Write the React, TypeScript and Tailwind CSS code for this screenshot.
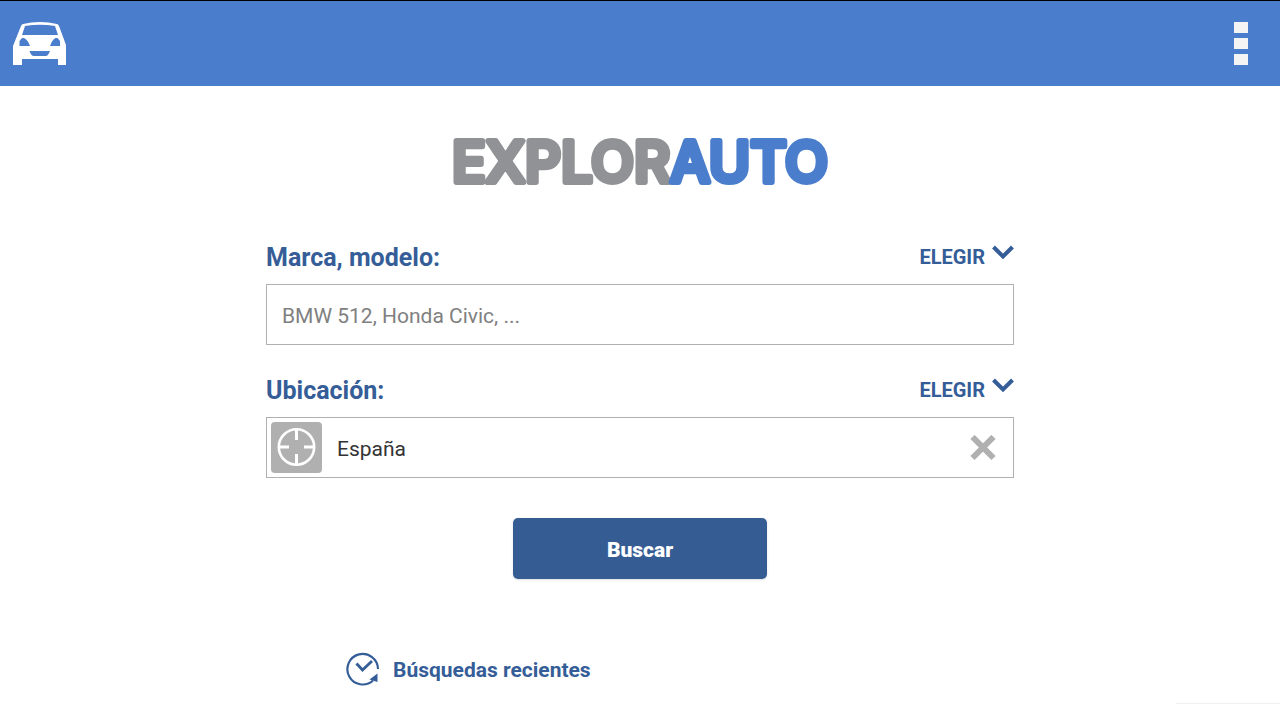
const fields = [
  { id: "model", label: "Marca, modelo:", placeholder: "BMW 512, Honda Civic, ...", value: "" },
  { id: "location", label: "Ubicación:", placeholder: "", value: "España" },
];

const CarIcon = () => (
  <svg width="54" height="44" viewBox="0 0 54 44" aria-hidden="true">
    <path
      fill="#fff"
      fillRule="evenodd"
      d="M10 2Q18 0 27 0t17 2Q45 2 46 4L53 23V43H45V37H9V43H0V24L8 4Q9 2 10 2ZM12 4 9 13H45L42 4Q27 1.500 12 4ZM9 16 6.500 19V24H17Q15 18 11 16ZM44.500 16 47 19V24H37Q39 18 42.500 16ZM16.500 29Q18 34 21 34H33Q35 34 37 29Z"
    />
  </svg>
);

const ChevronIcon = () => (
  <svg width="22" height="16" viewBox="0 0 22 16" aria-hidden="true">
    <path d="M1.500 3 11 12.500 20.500 3" fill="none" stroke="#355d98" strokeWidth="4" />
  </svg>
);

const TargetIcon = () => (
  <svg width="40" height="40" viewBox="0 0 40 40" fill="none" stroke="#fff" strokeWidth="3" aria-hidden="true">
    <circle cx="19.500" cy="19" r="17.700" strokeWidth="2.600" />
    <path d="M19.500 2V12M19.500 26V36M2 19H12M27 19H37" />
  </svg>
);

const CrossIcon = () => (
  <svg width="26" height="26" viewBox="0 0 26 26" aria-hidden="true">
    <path d="M2.500 2 23.500 23M23.500 2 2.500 23" stroke="#b0b0b0" strokeWidth="6" />
  </svg>
);

const HistoryIcon = () => (
  <svg width="34" height="34" viewBox="0 0 34 34" fill="none" stroke="#355d98" aria-hidden="true">
    <path d="M32 17A15.300 15.300 0 1 0 27 28.500" strokeWidth="2.200" />
    <path d="M10.500 11.500 16.500 18 26 9" strokeWidth="2.800" />
    <path d="M31.500 21.500V30L23.500 27.500Z" fill="#355d98" stroke="none" />
  </svg>
);

const Logo = () => (
  <h1 className="mt-[34px]">
    <svg width="400" height="84" viewBox="0 0 400 84" role="img" aria-label="EXPLORAUTO">
      <text
        x="200"
        y="62"
        textAnchor="middle"
        fontFamily="Inter, sans-serif"
        fontSize="56"
        fontWeight="500"
        strokeWidth="6"
        strokeLinejoin="round"
      >
        <tspan fill="#919295" stroke="#919295">EXPLOR</tspan>
        <tspan fill="#4a7dcc" stroke="#4a7dcc">AUTO</tspan>
      </text>
    </svg>
  </h1>
);

export default function App() {
  return (
    <div className="flex min-h-screen flex-col bg-white font-['Roboto',sans-serif]">
      <header className="flex h-[86px] items-center justify-between border-t border-black bg-[#4a7dcc] pl-[13px] pr-8">
        <a href="#" aria-label="Inicio">
          <CarIcon />
        </a>
        <button type="button" aria-label="Menú" className="flex flex-col gap-[5px]">
          <span className="h-[11px] w-[14px] bg-[#f4f4f4]" />
          <span className="h-[11px] w-[14px] bg-[#f4f4f4]" />
          <span className="h-[11px] w-[14px] bg-[#f4f4f4]" />
        </button>
      </header>

      <main className="mx-auto flex w-[748px] max-w-full flex-col items-center">
        <Logo />
        <form className="mt-10 flex w-full flex-col items-center gap-8">
          {fields.map((field) => (
            <div key={field.id} className="w-full">
              <div className="mb-3 flex justify-between">
                <label htmlFor={field.id} className="text-[25px] leading-7 font-bold text-[#355d98]">
                  {field.label}
                </label>
                <button type="button" className="flex items-start gap-[7px] text-[20px] leading-[26px] font-bold text-[#355d98]">
                  ELEGIR
                  <ChevronIcon />
                </button>
              </div>
              <div className="flex h-[61px] items-center border border-[#b0b0b0]">
                {field.id === "location" && (
                  <button
                    type="button"
                    aria-label="Usar mi ubicación"
                    className="ml-1 flex size-[51px] shrink-0 items-center justify-center rounded-[4px] bg-[#b0b0b0]"
                  >
                    <TargetIcon />
                  </button>
                )}
                <input
                  id={field.id}
                  type="text"
                  defaultValue={field.value}
                  placeholder={field.placeholder}
                  className="h-full min-w-0 flex-1 px-[15px] pt-[2px] text-[21px] text-[#333333] outline-none placeholder:text-[#808080]"
                />
                {field.id === "location" && (
                  <button type="button" aria-label="Borrar" className="mr-[17px]">
                    <CrossIcon />
                  </button>
                )}
              </div>
            </div>
          ))}
          <button
            type="submit"
            className="mt-2 h-[61px] w-[254px] rounded-[5px] bg-[#355d94] pt-1 text-[21px] font-black text-white shadow-sm"
          >
            Buscar
          </button>
        </form>
        <a href="#" className="mt-[73px] ml-20 flex items-center gap-[13px] self-start text-[21px] font-bold text-[#355d98]">
          <HistoryIcon />
          <span className="pt-[3px]">Búsquedas recientes</span>
        </a>
      </main>

      <div className="mt-auto h-px w-[104px] self-end bg-[#f0f0f0]" />
    </div>
  );
}
